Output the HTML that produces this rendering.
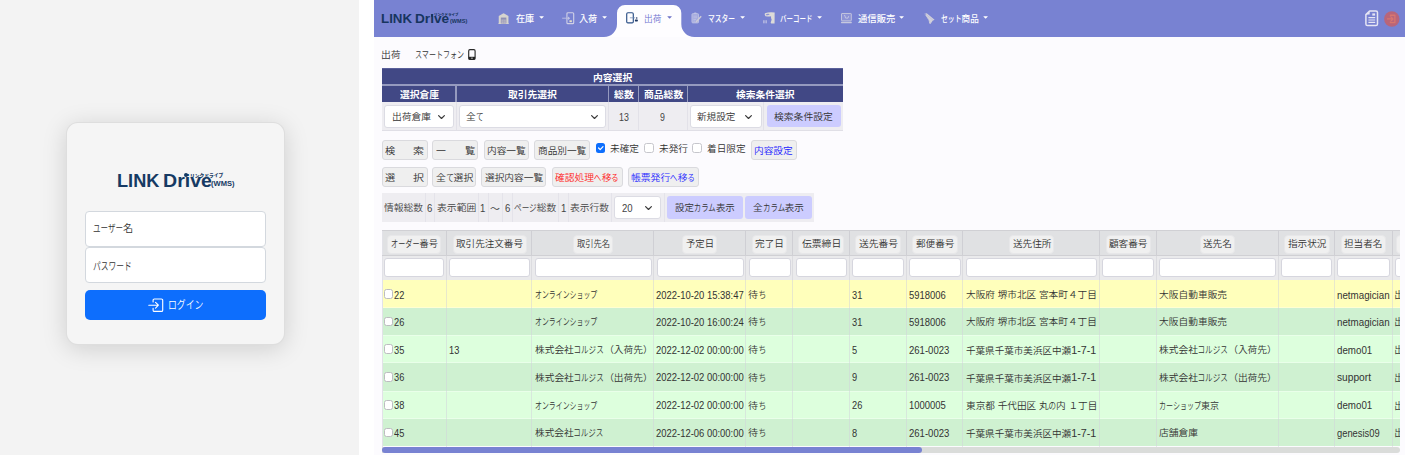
<!DOCTYPE html>
<html lang="ja"><head><meta charset="utf-8"><title>LINK Drive (WMS)</title><style>
html,body{margin:0;padding:0}
body{width:1405px;height:455px;overflow:hidden;background:#fff;position:relative;font-family:"Liberation Sans","Noto Sans CJK JP",sans-serif}
.b{position:absolute;box-sizing:border-box}
.t{position:absolute;white-space:nowrap;transform-origin:0 50%}
.k{display:inline-block;transform-origin:0 50%}
.a{font-size:112%;position:relative;top:-0.2px}
svg{position:absolute;overflow:visible}
</style></head><body>
<div class="b " style="left:0.0px;top:0.0px;width:359.0px;height:455.0px;background:#f3f3f3"></div>
<div class="b " style="left:66.0px;top:122.0px;width:219.0px;height:223.4px;background:#f5f5f5;border-radius:12px;border:1px solid rgba(0,0,0,.09);box-shadow:0 4px 24px rgba(0,0,0,.15)"></div>
<div id="t1" class="t" style="left:116.8px;top:165.9px;height:29px;line-height:29px;font-size:19.20px;color:#163a63;font-weight:700;transform:scaleX(0.9467);">LINK</div>
<div id="t2" class="t" style="left:163.2px;top:165.9px;height:29px;line-height:29px;font-size:19.20px;color:#163a63;font-weight:700;transform:scaleX(1.0198);">Drive</div>
<div id="t3" class="t" style="left:189.7px;top:171.8px;height:7px;line-height:7px;font-size:4.80px;color:#163a63;font-weight:900;transform:scaleX(0.9891);">リンクドライブ</div>
<div id="t4" class="t" style="left:211.4px;top:178.4px;height:11px;line-height:11px;font-size:7.20px;color:#163a63;font-weight:700;transform:scaleX(1.0514);">(WMS)</div>
<div class="b " style="left:184.1px;top:173.2px;width:3.9px;height:3.9px;background:#163a63;border-radius:50%"></div>
<div class="b " style="left:85.0px;top:211.0px;width:181.0px;height:35.6px;background:#fff;border:1px solid #d3d8de;border-radius:4px"></div>
<div class="b " style="left:85.0px;top:247.0px;width:181.0px;height:36.0px;background:#fff;border:1px solid #d3d8de;border-radius:4px"></div>
<div id="t5" class="t" style="left:92.5px;top:221.2px;height:16px;line-height:16px;font-size:10.40px;color:#333;font-weight:350;transform:scaleX(0.9825);"><span class="k" style="transform:scaleX(0.740);margin-right:-10.82px">ユーザー</span>名</div>
<div id="t6" class="t" style="left:92.5px;top:258.6px;height:16px;line-height:16px;font-size:10.40px;color:#333;font-weight:350;transform:scaleX(1.0080);"><span class="k" style="transform:scaleX(0.740);margin-right:-13.52px">パスワード</span></div>
<div class="b " style="left:85.0px;top:289.5px;width:180.7px;height:30.8px;background:#0d6efd;border-radius:5px"></div>
<svg style="left:148.3px;top:297.6px;" width="15.7" height="14.4" viewBox="0 0 16 14.5"><g fill="none" stroke="#fff" stroke-width="1.15" stroke-linecap="round" stroke-linejoin="round"><path d="M5.2 4V2.2a1.3 1.3 0 0 1 1.3-1.3h7.2A1.3 1.3 0 0 1 15 2.2v10.1a1.3 1.3 0 0 1-1.3 1.3H6.5a1.3 1.3 0 0 1-1.3-1.3v-1.8"/><path d="M0.8 7.25h9.6M7.7 4.3l2.9 2.95-2.9 2.95"/></g></svg>
<div id="t7" class="t" style="left:168.1px;top:297.1px;height:17px;line-height:17px;font-size:11.20px;color:#fff;font-weight:350;transform:scaleX(1.0148);"><span class="k" style="transform:scaleX(0.780);margin-right:-9.86px">ログイン</span></div>
<div class="b " style="left:374.0px;top:0.0px;width:1031.0px;height:455.0px;background:#fcfbfe"></div>
<div class="b " style="left:374.0px;top:0.0px;width:1031.0px;height:37.0px;background:#7882d2"></div>
<div id="t8" class="t" style="left:380.6px;top:8.7px;height:20px;line-height:20px;font-size:13.14px;color:#17355f;font-weight:700;transform:scaleX(1.0158);">LINK</div>
<div id="t9" class="t" style="left:414.8px;top:8.7px;height:20px;line-height:20px;font-size:13.14px;color:#17355f;font-weight:700;transform:scaleX(1.0399);">Drive</div>
<div id="t10" class="t" style="left:434.1px;top:12.9px;height:5px;line-height:5px;font-size:3.52px;color:#17355f;font-weight:900;transform:scaleX(0.9904);">リンクドライブ</div>
<div id="t11" class="t" style="left:450.1px;top:17.3px;height:8px;line-height:8px;font-size:5.28px;color:#17355f;font-weight:700;transform:scaleX(1.0528);">(WMS)</div>
<div class="b " style="left:430.6px;top:14.2px;width:2.6px;height:2.6px;background:#17355f;border-radius:50%"></div>
<svg style="left:600.0px;top:0.0px;" width="100.0" height="37.0" viewBox="0 0 100 37"><path d="M4 37 A13 13 0 0 0 17 24 L17 13 A8 8 0 0 1 25 5 L73.3 5 A8 8 0 0 1 81.3 13 L81.3 24 A13 13 0 0 0 94.3 37 Z" fill="#fefdff"/></svg>
<svg style="left:498.2px;top:12.6px;" width="11.2" height="11.1" viewBox="0 0 16 16"><path d="M8 0.3 L9.4 1 L15 4.2 V15 H15.8 V16 H0.2 V15 H1 V4.2 L6.6 1 Z" fill="#d6d4cf"/><rect x="4" y="6.6" width="8" height="8.4" fill="#8f8fb4"/><rect x="4.8" y="9.4" width="6.4" height="5.6" fill="#b7b4c4"/><path d="M4.8 11.8h6.4M8 9.4v5.6" stroke="#9a98b8" stroke-width=".6"/></svg>
<div id="t12" class="t" style="left:515.8px;top:13.3px;height:13px;line-height:13px;font-size:8.75px;color:#fff;font-weight:500;transform:scaleX(1.0411);">在庫</div>
<svg style="left:538.7px;top:15.8px;" width="5.2" height="2.7" viewBox="0 0 11.6 6.2"><path d="M1 0.4h9.6q0.9 0.1 0.3 0.9L6.5 5.7q-0.7 0.6-1.4 0L0.7 1.3q-0.6-0.8 0.3-0.9z" fill="#fff"/></svg>
<svg style="left:562.3px;top:11.7px;" width="12.4" height="12.4" viewBox="0 0 17.6 17.6"><g fill="none" stroke="#cfd0e6" stroke-width="1.6" stroke-linecap="round" stroke-linejoin="round"><rect x="7" y="1" width="9.6" height="15.6" rx="1.4"/></g><path d="M0.8 8.8h8.4" stroke="#b9bce2" stroke-width="1.4" stroke-linecap="round"/><path d="M8.6 6.4L11.6 8.8 8.6 11.2z" fill="#c6c8e4"/><rect x="10.6" y="11.8" width="3.4" height="2.6" fill="#e4e0c8"/></svg>
<div id="t13" class="t" style="left:579.4px;top:13.3px;height:13px;line-height:13px;font-size:8.75px;color:#fff;font-weight:500;transform:scaleX(1.0411);">入荷</div>
<svg style="left:602.2px;top:15.8px;" width="5.2" height="2.7" viewBox="0 0 11.6 6.2"><path d="M1 0.4h9.6q0.9 0.1 0.3 0.9L6.5 5.7q-0.7 0.6-1.4 0L0.7 1.3q-0.6-0.8 0.3-0.9z" fill="#fff"/></svg>
<svg style="left:625.7px;top:12.1px;" width="12.6" height="11.6" viewBox="0 0 17.6 16.2"><rect x="1" y="1" width="9.2" height="14.2" rx="1.7" fill="none" stroke="#2b4f86" stroke-width="1.6"/><path d="M5.4 8.1h7.4" stroke="#6d86b0" stroke-width="1"/><circle cx="15" cy="8.4" r="1.1" fill="#1f3864"/><rect x="12.4" y="10.6" width="4.2" height="2.6" rx="1" fill="#1f3864"/></svg>
<div id="t14" class="t" style="left:644.3px;top:13.3px;height:13px;line-height:13px;font-size:8.90px;color:#6f74d0;font-weight:350;transform:scaleX(0.9794);">出荷</div>
<svg style="left:667.3px;top:15.8px;" width="5.2" height="2.7" viewBox="0 0 11.6 6.2"><path d="M1 0.4h9.6q0.9 0.1 0.3 0.9L6.5 5.7q-0.7 0.6-1.4 0L0.7 1.3q-0.6-0.8 0.3-0.9z" fill="#6f74c8"/></svg>
<svg style="left:690.9px;top:12.3px;" width="11.0" height="11.6" viewBox="0 0 16 16.8"><path d="M1.4 3.6 Q1.4 2.4 2.6 2.4 H9.8 Q11 2.4 11 3.6 V14.6 Q11 15.8 9.8 15.8 H2.6 Q1.4 15.8 1.4 14.6 Z" fill="#a4aade" stroke="#c4c7e6" stroke-width="1.2"/><path d="M3.4 6h5.6M3.4 8.4h5.6M3.4 10.8h4M3.4 13.2h3" stroke="#c9cbe8" stroke-width=".9"/><path d="M4 2.6 Q4 0.6 6.2 0.6 Q8.4 0.6 8.4 2.6 Z" fill="#c4c7e6"/><path d="M7.2 13.2 L14 5.4 L15.6 6.8 L8.8 14.6 L6.6 15.4 Z" fill="#cdcbd6"/></svg>
<div id="t15" class="t" style="left:707.8px;top:13.3px;height:13px;line-height:13px;font-size:8.75px;color:#fff;font-weight:500;transform:scaleX(0.9665);"><span class="k" style="transform:scaleX(0.800);margin-right:-7.00px">マスター</span></div>
<svg style="left:739.7px;top:15.8px;" width="5.2" height="2.7" viewBox="0 0 11.6 6.2"><path d="M1 0.4h9.6q0.9 0.1 0.3 0.9L6.5 5.7q-0.7 0.6-1.4 0L0.7 1.3q-0.6-0.8 0.3-0.9z" fill="#fff"/></svg>
<svg style="left:762.6px;top:12.2px;" width="12.6" height="11.8" viewBox="0 0 17.2 16"><path d="M2.6 1.8 Q8 -0.4 16 0.6 L15.8 5 Q10 6.8 3.4 5.6 Q1.6 3.8 2.6 1.8 Z" fill="#dddbd8"/><ellipse cx="6.4" cy="3.4" rx="2.6" ry="1" fill="#8d93d4" transform="rotate(-8 6.4 3.4)"/><path d="M11 5.4 L15.9 4.6 L15.8 15.6 H11.4 Q10.2 15.4 10.6 14 L11.8 10.4 Q10.6 8.6 11 5.4 Z" fill="#dddbd8"/><path d="M0.9 11.2v4.2M2.7 11.2v4.2M4.6 11.2v4.2" stroke="#c9cbe6" stroke-width="1.1"/></svg>
<div id="t16" class="t" style="left:780.3px;top:13.3px;height:13px;line-height:13px;font-size:8.75px;color:#fff;font-weight:500;transform:scaleX(0.9266);"><span class="k" style="transform:scaleX(0.800);margin-right:-8.75px">バーコード</span></div>
<svg style="left:817.3px;top:15.8px;" width="5.2" height="2.7" viewBox="0 0 11.6 6.2"><path d="M1 0.4h9.6q0.9 0.1 0.3 0.9L6.5 5.7q-0.7 0.6-1.4 0L0.7 1.3q-0.6-0.8 0.3-0.9z" fill="#fff"/></svg>
<svg style="left:841.2px;top:13.0px;" width="10.8" height="10.2" viewBox="0 0 16 15.2"><rect x="0.7" y="0.7" width="14.6" height="11" rx="0.7" fill="#8d93d6" stroke="#c6c8de" stroke-width="1.4"/><path d="M4.4 3.6h1.2l1.2 4h3.6l1-3" stroke="#d8d9ea" stroke-width="1" fill="none"/><rect x="0" y="13" width="16" height="2.2" rx=".5" fill="#c6c8de"/></svg>
<div id="t17" class="t" style="left:857.6px;top:13.3px;height:13px;line-height:13px;font-size:8.75px;color:#fff;font-weight:500;transform:scaleX(1.0698);">通信販売</div>
<svg style="left:899.3px;top:15.8px;" width="5.2" height="2.7" viewBox="0 0 11.6 6.2"><path d="M1 0.4h9.6q0.9 0.1 0.3 0.9L6.5 5.7q-0.7 0.6-1.4 0L0.7 1.3q-0.6-0.8 0.3-0.9z" fill="#fff"/></svg>
<svg style="left:924.0px;top:12.6px;" width="11.0" height="11.2" viewBox="0 0 16 16.2"><path d="M0.6 1 L4 0.2 L15.4 9.6 L12.6 11.4 L9.4 15.8 L7.4 15 L7 10.4 Z" fill="#d2d1da"/><path d="M3 2.2L13 10.4M5 6.4L9 14.6" stroke="#b4b6d8" stroke-width=".8" fill="none"/><circle cx="2.2" cy="1.6" r=".8" fill="#8d93d4"/></svg>
<div id="t18" class="t" style="left:940.6px;top:13.3px;height:13px;line-height:13px;font-size:8.75px;color:#fff;font-weight:500;transform:scaleX(0.9811);"><span class="k" style="transform:scaleX(0.800);margin-right:-5.25px">セット</span>商品</div>
<svg style="left:983.1px;top:15.8px;" width="5.2" height="2.7" viewBox="0 0 11.6 6.2"><path d="M1 0.4h9.6q0.9 0.1 0.3 0.9L6.5 5.7q-0.7 0.6-1.4 0L0.7 1.3q-0.6-0.8 0.3-0.9z" fill="#fff"/></svg>
<svg style="left:1364.6px;top:10.2px;" width="13.4" height="16.5" viewBox="0 0 13.4 16.5"><path d="M4.6 0.9 H10.9 Q12.5 0.9 12.5 2.5 V14 Q12.5 15.6 10.9 15.6 H2.5 Q0.9 15.6 0.9 14 V4.6 Z" fill="none" stroke="#e6e6f4" stroke-width="1.5" stroke-linejoin="round"/><path d="M0.9 4.6 H4.6 V0.9 Z" fill="#e6e6f4"/><rect x="7.3" y="3.4" width="2.8" height="2.2" fill="#e6e6f4"/><path d="M3.4 7.6h6.8M3.4 10h6.8M3.4 12.4h6.8" stroke="#e6e6f4" stroke-width="1.1"/></svg>
<svg style="left:1384.3px;top:10.5px;" width="15.6" height="15.9" viewBox="0 0 16 16"><circle cx="8" cy="8" r="7.9" fill="#c4606a" opacity=".85"/><g fill="none" stroke="#d8766e" stroke-width="1.3" stroke-linecap="round" stroke-linejoin="round"><path d="M6.6 5V4.2h4.6v7.6H6.6V11"/><path d="M3.6 8h5.4M7.4 6.2L9.2 8 7.4 9.8"/></g></svg>
<div id="t19" class="t" style="left:381.2px;top:48.1px;height:14px;line-height:14px;font-size:9.60px;color:#333;font-weight:350;transform:scaleX(1.0260);">出荷</div>
<div id="t20" class="t" style="left:415.0px;top:48.1px;height:14px;line-height:14px;font-size:9.60px;color:#333;font-weight:350;transform:scaleX(0.9425);"><span class="k" style="transform:scaleX(0.780);margin-right:-14.78px">スマートフォン</span></div>
<svg style="left:468.3px;top:48.7px;" width="7.8" height="11.2" viewBox="0 0 7.8 11.2"><rect x="0.7" y="0.7" width="6.4" height="9.8" rx="1.2" fill="none" stroke="#2a2a2a" stroke-width="1.15"/><rect x="0.7" y="7.8" width="6.4" height="2.7" fill="#222"/><rect x="2.9" y="8.7" width="2" height=".9" fill="#ccc"/></svg>
<div class="b " style="left:382.4px;top:68.0px;width:460.8px;height:34.0px;background:#414885"></div>
<div class="b " style="left:382.4px;top:84.1px;width:460.8px;height:1.5px;background:#959abf"></div>
<div class="b " style="left:455.4px;top:85.0px;width:1.4px;height:17.0px;background:#959abf"></div>
<div class="b " style="left:607.8px;top:85.0px;width:1.4px;height:17.0px;background:#959abf"></div>
<div class="b " style="left:637.9px;top:85.0px;width:1.4px;height:17.0px;background:#959abf"></div>
<div class="b " style="left:686.5px;top:85.0px;width:1.4px;height:17.0px;background:#959abf"></div>
<div class="b " style="left:382.4px;top:68.0px;width:460.8px;height:1.0px;background:#5a609a"></div>
<div class="b " style="left:382.4px;top:101.8px;width:460.8px;height:28.7px;background:#eeedf1"></div>
<div class="b " style="left:455.6px;top:101.8px;width:1.0px;height:28.7px;background:#e2e1e8"></div>
<div class="b " style="left:608.0px;top:101.8px;width:1.0px;height:28.7px;background:#e2e1e8"></div>
<div class="b " style="left:638.1px;top:101.8px;width:1.0px;height:28.7px;background:#e2e1e8"></div>
<div class="b " style="left:686.7px;top:101.8px;width:1.0px;height:28.7px;background:#e2e1e8"></div>
<div class="b " style="left:763.3px;top:101.8px;width:1.0px;height:28.7px;background:#e2e1e8"></div>
<div class="b " style="left:382.4px;top:130.0px;width:460.8px;height:0.8px;background:#e0dfe6"></div>
<div id="t21" class="t" style="left:592.9px;top:70.8px;height:14px;line-height:14px;font-size:9.60px;color:#fff;font-weight:700;transform:scaleX(1.0210);">内容選択</div>
<div id="t22" class="t" style="left:399.6px;top:88.0px;height:14px;line-height:14px;font-size:9.60px;color:#fff;font-weight:700;transform:scaleX(1.0184);">選択倉庫</div>
<div id="t23" class="t" style="left:507.9px;top:88.0px;height:14px;line-height:14px;font-size:9.60px;color:#fff;font-weight:700;transform:scaleX(1.0190);">取引先選択</div>
<div id="t24" class="t" style="left:613.7px;top:88.0px;height:14px;line-height:14px;font-size:9.60px;color:#fff;font-weight:700;transform:scaleX(1.0315);">総数</div>
<div id="t25" class="t" style="left:643.5px;top:88.0px;height:14px;line-height:14px;font-size:9.60px;color:#fff;font-weight:700;transform:scaleX(1.0210);">商品総数</div>
<div id="t26" class="t" style="left:735.9px;top:88.0px;height:14px;line-height:14px;font-size:9.60px;color:#fff;font-weight:700;transform:scaleX(1.0141);">検索条件選択</div>
<div class="b " style="left:384.0px;top:105.0px;width:69.6px;height:22.8px;background:#fff;border:1px solid #dcdce4;border-radius:3px"></div>
<div id="t27" class="t" style="left:391.9px;top:109.6px;height:14px;line-height:14px;font-size:9.60px;color:#333;font-weight:350;transform:scaleX(1.0184);">出荷倉庫</div>
<svg style="left:437.7px;top:114.9px;" width="7.0" height="4.2" viewBox="0 0 7 4.2"><path d="M0.6 0.6L3.5 3.5 6.4 0.6" fill="none" stroke="#3a3a3a" stroke-width="1.2" stroke-linecap="round" stroke-linejoin="round"/></svg>
<div class="b " style="left:459.0px;top:105.0px;width:146.8px;height:22.8px;background:#fff;border:1px solid #dcdce4;border-radius:3px"></div>
<div id="t28" class="t" style="left:466.4px;top:109.6px;height:14px;line-height:14px;font-size:9.60px;color:#333;font-weight:350;transform:scaleX(1.0115);">全<span class="k" style="transform:scaleX(0.780);margin-right:-2.11px">て</span></div>
<svg style="left:590.7px;top:114.9px;" width="7.0" height="4.2" viewBox="0 0 7 4.2"><path d="M0.6 0.6L3.5 3.5 6.4 0.6" fill="none" stroke="#3a3a3a" stroke-width="1.2" stroke-linecap="round" stroke-linejoin="round"/></svg>
<div id="t29" class="t" style="left:618.6px;top:110.1px;height:15px;line-height:15px;font-size:10.00px;color:#444;font-weight:350;transform:scaleX(.88);">13</div>
<div id="t30" class="t" style="left:660.2px;top:110.1px;height:15px;line-height:15px;font-size:10.00px;color:#444;font-weight:350;transform:scaleX(.88);">9</div>
<div class="b " style="left:689.7px;top:105.0px;width:72.0px;height:22.8px;background:#fff;border:1px solid #dcdce4;border-radius:3px"></div>
<div id="t31" class="t" style="left:697.2px;top:109.6px;height:14px;line-height:14px;font-size:9.60px;color:#333;font-weight:350;transform:scaleX(0.9970);">新規設定</div>
<svg style="left:744.9px;top:114.9px;" width="7.0" height="4.2" viewBox="0 0 7 4.2"><path d="M0.6 0.6L3.5 3.5 6.4 0.6" fill="none" stroke="#3a3a3a" stroke-width="1.2" stroke-linecap="round" stroke-linejoin="round"/></svg>
<div class="b " style="left:767.0px;top:105.0px;width:73.5px;height:22.4px;background:#ccccff;border-radius:3px"></div>
<div id="t32" class="t" style="left:774.0px;top:109.8px;height:14px;line-height:14px;font-size:9.60px;color:#333;font-weight:350;transform:scaleX(1.0212);">検索条件設定</div>
<div class="b " style="left:382.0px;top:140.2px;width:45.8px;height:19.6px;background:#efefef;border:1px solid #dadade;border-radius:3px"></div>
<div id="t33" class="t" style="left:384.5px;top:144.2px;height:14px;line-height:14px;font-size:9.60px;color:#333;font-weight:350;transform:scaleX(1.0653);">検</div>
<div id="t34" class="t" style="left:413.0px;top:144.2px;height:14px;line-height:14px;font-size:9.60px;color:#333;font-weight:350;transform:scaleX(1.1455);">索</div>
<div class="b " style="left:432.4px;top:140.2px;width:45.8px;height:19.6px;background:#efefef;border:1px solid #dadade;border-radius:3px"></div>
<div id="t35" class="t" style="left:436.1px;top:144.2px;height:14px;line-height:14px;font-size:9.60px;color:#333;font-weight:350;transform:scaleX(1.0310);">一</div>
<div id="t36" class="t" style="left:465.0px;top:144.2px;height:14px;line-height:14px;font-size:9.60px;color:#333;font-weight:350;transform:scaleX(1.0653);">覧</div>
<div class="b " style="left:483.6px;top:140.2px;width:45.8px;height:19.6px;background:#efefef;border:1px solid #dadade;border-radius:3px"></div>
<div id="t37" class="t" style="left:487.2px;top:144.2px;height:14px;line-height:14px;font-size:9.60px;color:#333;font-weight:350;transform:scaleX(1.0077);">内容一覧</div>
<div class="b " style="left:534.4px;top:140.2px;width:55.4px;height:19.6px;background:#efefef;border:1px solid #dadade;border-radius:3px"></div>
<div id="t38" class="t" style="left:538.2px;top:144.2px;height:14px;line-height:14px;font-size:9.60px;color:#333;font-weight:350;transform:scaleX(1.0063);">商品別一覧</div>
<div class="b " style="left:595.7px;top:143.0px;width:9.6px;height:9.8px;background:#0d6efd;border-radius:2.5px"></div>
<svg style="left:595.7px;top:143.0px;" width="9.6" height="9.8" viewBox="0 0 9.6 9.8"><path d="M2.6 5l1.6 1.6L7 3.6" fill="none" stroke="#fff" stroke-width="1.2" stroke-linecap="round" stroke-linejoin="round"/></svg>
<div id="t39" class="t" style="left:609.8px;top:141.8px;height:14px;line-height:14px;font-size:9.60px;color:#333;font-weight:350;transform:scaleX(1.0065);">未確定</div>
<div class="b " style="left:644.2px;top:143.0px;width:9.6px;height:9.8px;background:#fff;border:1px solid #c6c6cc;border-radius:2.5px"></div>
<div id="t40" class="t" style="left:658.5px;top:141.8px;height:14px;line-height:14px;font-size:9.60px;color:#333;font-weight:350;transform:scaleX(1.0065);">未発行</div>
<div class="b " style="left:692.3px;top:143.0px;width:9.6px;height:9.8px;background:#fff;border:1px solid #c6c6cc;border-radius:2.5px"></div>
<div id="t41" class="t" style="left:706.9px;top:141.8px;height:14px;line-height:14px;font-size:9.60px;color:#333;font-weight:350;transform:scaleX(1.0050);">着日限定</div>
<div class="b " style="left:751.0px;top:140.2px;width:45.7px;height:19.6px;background:#efefef;border:1px solid #dadade;border-radius:3px"></div>
<div id="t42" class="t" style="left:754.4px;top:144.2px;height:14px;line-height:14px;font-size:9.60px;color:#1a1aff;font-weight:350;transform:scaleX(1.0077);">内容設定</div>
<div class="b " style="left:382.0px;top:167.1px;width:45.8px;height:19.6px;background:#efefef;border:1px solid #dadade;border-radius:3px"></div>
<div id="t43" class="t" style="left:384.5px;top:171.1px;height:14px;line-height:14px;font-size:9.60px;color:#333;font-weight:350;transform:scaleX(1.0653);">選</div>
<div id="t44" class="t" style="left:413.0px;top:171.1px;height:14px;line-height:14px;font-size:9.60px;color:#333;font-weight:350;transform:scaleX(1.1455);">択</div>
<div class="b " style="left:432.4px;top:167.1px;width:43.2px;height:19.6px;background:#efefef;border:1px solid #dadade;border-radius:3px"></div>
<div id="t45" class="t" style="left:435.6px;top:171.1px;height:14px;line-height:14px;font-size:9.60px;color:#333;font-weight:350;transform:scaleX(1.0282);">全<span class="k" style="transform:scaleX(0.780);margin-right:-2.11px">て</span>選択</div>
<div class="b " style="left:481.2px;top:167.1px;width:65.2px;height:19.6px;background:#efefef;border:1px solid #dadade;border-radius:3px"></div>
<div id="t46" class="t" style="left:484.8px;top:171.1px;height:14px;line-height:14px;font-size:9.60px;color:#333;font-weight:350;transform:scaleX(1.0088);">選択内容一覧</div>
<div class="b " style="left:552.0px;top:167.1px;width:70.7px;height:19.6px;background:#efefef;border:1px solid #dadade;border-radius:3px"></div>
<div id="t47" class="t" style="left:555.2px;top:171.1px;height:14px;line-height:14px;font-size:9.60px;color:#ff1a1a;font-weight:350;transform:scaleX(1.0181);">確認処理<span class="k" style="transform:scaleX(0.780);margin-right:-2.11px">へ</span>移<span class="k" style="transform:scaleX(0.780);margin-right:-2.11px">る</span></div>
<div class="b " style="left:627.5px;top:167.1px;width:71.3px;height:19.6px;background:#efefef;border:1px solid #dadade;border-radius:3px"></div>
<div id="t48" class="t" style="left:631.2px;top:171.1px;height:14px;line-height:14px;font-size:9.60px;color:#2a2aff;font-weight:350;transform:scaleX(1.0214);">帳票発行<span class="k" style="transform:scaleX(0.780);margin-right:-2.11px">へ</span>移<span class="k" style="transform:scaleX(0.780);margin-right:-2.11px">る</span></div>
<div class="b " style="left:382.0px;top:193.4px;width:431.8px;height:28.5px;background:#eeedf1"></div>
<div class="b " style="left:424.9px;top:193.4px;width:1.0px;height:28.5px;background:#e4e3ea"></div>
<div class="b " style="left:434.3px;top:193.4px;width:1.0px;height:28.5px;background:#e4e3ea"></div>
<div class="b " style="left:477.5px;top:193.4px;width:1.0px;height:28.5px;background:#e4e3ea"></div>
<div class="b " style="left:487.5px;top:193.4px;width:1.0px;height:28.5px;background:#e4e3ea"></div>
<div class="b " style="left:502.0px;top:193.4px;width:1.0px;height:28.5px;background:#e4e3ea"></div>
<div class="b " style="left:511.5px;top:193.4px;width:1.0px;height:28.5px;background:#e4e3ea"></div>
<div class="b " style="left:557.8px;top:193.4px;width:1.0px;height:28.5px;background:#e4e3ea"></div>
<div class="b " style="left:567.8px;top:193.4px;width:1.0px;height:28.5px;background:#e4e3ea"></div>
<div class="b " style="left:611.1px;top:193.4px;width:1.0px;height:28.5px;background:#e4e3ea"></div>
<div class="b " style="left:663.6px;top:193.4px;width:1.0px;height:28.5px;background:#e4e3ea"></div>
<div id="t49" class="t" style="left:384.2px;top:201.4px;height:14px;line-height:14px;font-size:9.60px;color:#444;font-weight:350;transform:scaleX(1.0184);">情報総数</div>
<div id="t50" class="t" style="left:427.4px;top:199.9px;height:16px;line-height:16px;font-size:10.90px;color:#444;font-weight:350;transform:scaleX(.88);">6</div>
<div id="t51" class="t" style="left:436.6px;top:201.4px;height:14px;line-height:14px;font-size:9.60px;color:#444;font-weight:350;transform:scaleX(1.0237);">表示範囲</div>
<div id="t52" class="t" style="left:480.4px;top:199.9px;height:16px;line-height:16px;font-size:10.90px;color:#444;font-weight:350;transform:scaleX(.88);">1</div>
<div id="t53" class="t" style="left:490.2px;top:201.6px;height:14px;line-height:14px;font-size:9.60px;color:#444;font-weight:350;transform:scaleX(1.0310);">～</div>
<div id="t54" class="t" style="left:504.6px;top:199.9px;height:16px;line-height:16px;font-size:10.90px;color:#444;font-weight:350;transform:scaleX(.88);">6</div>
<div id="t55" class="t" style="left:514.0px;top:201.4px;height:14px;line-height:14px;font-size:9.60px;color:#444;font-weight:350;transform:scaleX(1.0200);"><span class="k" style="transform:scaleX(0.780);margin-right:-6.34px">ページ</span>総数</div>
<div id="t56" class="t" style="left:560.6px;top:199.9px;height:16px;line-height:16px;font-size:10.90px;color:#444;font-weight:350;transform:scaleX(.88);">1</div>
<div id="t57" class="t" style="left:570.2px;top:201.4px;height:14px;line-height:14px;font-size:9.60px;color:#444;font-weight:350;transform:scaleX(1.0184);">表示行数</div>
<div class="b " style="left:614.4px;top:196.1px;width:47.0px;height:22.6px;background:#fff;border:1px solid #dcdce4;border-radius:3px"></div>
<div id="t58" class="t" style="left:622.0px;top:199.9px;height:16px;line-height:16px;font-size:10.60px;color:#444;font-weight:350;transform:scaleX(.9);">20</div>
<svg style="left:645.3px;top:206.3px;" width="7.0" height="4.2" viewBox="0 0 7 4.2"><path d="M0.6 0.6L3.5 3.5 6.4 0.6" fill="none" stroke="#3a3a3a" stroke-width="1.2" stroke-linecap="round" stroke-linejoin="round"/></svg>
<div class="b " style="left:667.0px;top:196.0px;width:76.0px;height:22.9px;background:#ccccff;border-radius:3px"></div>
<div id="t59" class="t" style="left:675.1px;top:201.4px;height:14px;line-height:14px;font-size:9.60px;color:#333;font-weight:350;transform:scaleX(0.9886);">設定<span class="k" style="transform:scaleX(0.780);margin-right:-6.34px">カラム</span>表示</div>
<div class="b " style="left:745.4px;top:196.0px;width:66.4px;height:22.9px;background:#ccccff;border-radius:3px"></div>
<div id="t60" class="t" style="left:753.2px;top:201.4px;height:14px;line-height:14px;font-size:9.60px;color:#333;font-weight:350;transform:scaleX(0.9982);">全<span class="k" style="transform:scaleX(0.780);margin-right:-6.34px">カラム</span>表示</div>
<div class="b" style="left:382.0px;top:0;width:1017.8px;height:447px;overflow:hidden"><div class="b" style="left:0.0px;top:230.8px;width:1100.0px;height:24.6px;background:#e0e1e3"></div><div class="b" style="left:0.0px;top:255.4px;width:1100.0px;height:25.0px;background:#eaeaec"></div><div class="b" style="left:0.0px;top:280.4px;width:1100.0px;height:27.3px;background:#ffffbb"></div><div class="b" style="left:0.0px;top:307.7px;width:1100.0px;height:27.5px;background:#cff1d1"></div><div class="b" style="left:0.0px;top:307.3px;width:1100.0px;height:0.8px;background:rgba(255,255,255,.35)"></div><div class="b" style="left:0.0px;top:335.2px;width:1100.0px;height:27.6px;background:#ddffdd"></div><div class="b" style="left:0.0px;top:334.8px;width:1100.0px;height:0.8px;background:rgba(255,255,255,.35)"></div><div class="b" style="left:0.0px;top:362.8px;width:1100.0px;height:28.2px;background:#cff1d1"></div><div class="b" style="left:0.0px;top:362.4px;width:1100.0px;height:0.8px;background:rgba(255,255,255,.35)"></div><div class="b" style="left:0.0px;top:391.0px;width:1100.0px;height:27.8px;background:#ddffdd"></div><div class="b" style="left:0.0px;top:390.6px;width:1100.0px;height:0.8px;background:rgba(255,255,255,.35)"></div><div class="b" style="left:0.0px;top:418.8px;width:1100.0px;height:27.5px;background:#cff1d1"></div><div class="b" style="left:0.0px;top:418.4px;width:1100.0px;height:0.8px;background:rgba(255,255,255,.35)"></div><div class="b" style="left:63.7px;top:230.8px;width:1.0px;height:24.6px;background:#cfcfd4"></div><div class="b" style="left:63.7px;top:255.4px;width:1.0px;height:25.0px;background:#dcdce0"></div><div class="b" style="left:63.7px;top:280.4px;width:1.0px;height:166.4px;background:rgba(210,210,220,.5)"></div><div class="b" style="left:149.3px;top:230.8px;width:1.0px;height:24.6px;background:#cfcfd4"></div><div class="b" style="left:149.3px;top:255.4px;width:1.0px;height:25.0px;background:#dcdce0"></div><div class="b" style="left:149.3px;top:280.4px;width:1.0px;height:166.4px;background:rgba(210,210,220,.5)"></div><div class="b" style="left:271.4px;top:230.8px;width:1.0px;height:24.6px;background:#cfcfd4"></div><div class="b" style="left:271.4px;top:255.4px;width:1.0px;height:25.0px;background:#dcdce0"></div><div class="b" style="left:271.4px;top:280.4px;width:1.0px;height:166.4px;background:rgba(210,210,220,.5)"></div><div class="b" style="left:363.4px;top:230.8px;width:1.0px;height:24.6px;background:#cfcfd4"></div><div class="b" style="left:363.4px;top:255.4px;width:1.0px;height:25.0px;background:#dcdce0"></div><div class="b" style="left:363.4px;top:280.4px;width:1.0px;height:166.4px;background:rgba(210,210,220,.5)"></div><div class="b" style="left:410.4px;top:230.8px;width:1.0px;height:24.6px;background:#cfcfd4"></div><div class="b" style="left:410.4px;top:255.4px;width:1.0px;height:25.0px;background:#dcdce0"></div><div class="b" style="left:410.4px;top:280.4px;width:1.0px;height:166.4px;background:rgba(210,210,220,.5)"></div><div class="b" style="left:467.0px;top:230.8px;width:1.0px;height:24.6px;background:#cfcfd4"></div><div class="b" style="left:467.0px;top:255.4px;width:1.0px;height:25.0px;background:#dcdce0"></div><div class="b" style="left:467.0px;top:280.4px;width:1.0px;height:166.4px;background:rgba(210,210,220,.5)"></div><div class="b" style="left:524.1px;top:230.8px;width:1.0px;height:24.6px;background:#cfcfd4"></div><div class="b" style="left:524.1px;top:255.4px;width:1.0px;height:25.0px;background:#dcdce0"></div><div class="b" style="left:524.1px;top:280.4px;width:1.0px;height:166.4px;background:rgba(210,210,220,.5)"></div><div class="b" style="left:580.4px;top:230.8px;width:1.0px;height:24.6px;background:#cfcfd4"></div><div class="b" style="left:580.4px;top:255.4px;width:1.0px;height:25.0px;background:#dcdce0"></div><div class="b" style="left:580.4px;top:280.4px;width:1.0px;height:166.4px;background:rgba(210,210,220,.5)"></div><div class="b" style="left:716.9px;top:230.8px;width:1.0px;height:24.6px;background:#cfcfd4"></div><div class="b" style="left:716.9px;top:255.4px;width:1.0px;height:25.0px;background:#dcdce0"></div><div class="b" style="left:716.9px;top:280.4px;width:1.0px;height:166.4px;background:rgba(210,210,220,.5)"></div><div class="b" style="left:773.6px;top:230.8px;width:1.0px;height:24.6px;background:#cfcfd4"></div><div class="b" style="left:773.6px;top:255.4px;width:1.0px;height:25.0px;background:#dcdce0"></div><div class="b" style="left:773.6px;top:280.4px;width:1.0px;height:166.4px;background:rgba(210,210,220,.5)"></div><div class="b" style="left:895.7px;top:230.8px;width:1.0px;height:24.6px;background:#cfcfd4"></div><div class="b" style="left:895.7px;top:255.4px;width:1.0px;height:25.0px;background:#dcdce0"></div><div class="b" style="left:895.7px;top:280.4px;width:1.0px;height:166.4px;background:rgba(210,210,220,.5)"></div><div class="b" style="left:952.2px;top:230.8px;width:1.0px;height:24.6px;background:#cfcfd4"></div><div class="b" style="left:952.2px;top:255.4px;width:1.0px;height:25.0px;background:#dcdce0"></div><div class="b" style="left:952.2px;top:280.4px;width:1.0px;height:166.4px;background:rgba(210,210,220,.5)"></div><div class="b" style="left:1009.6px;top:230.8px;width:1.0px;height:24.6px;background:#cfcfd4"></div><div class="b" style="left:1009.6px;top:255.4px;width:1.0px;height:25.0px;background:#dcdce0"></div><div class="b" style="left:1009.6px;top:280.4px;width:1.0px;height:166.4px;background:rgba(210,210,220,.5)"></div><div class="b" style="left:-0.3px;top:230.8px;width:1.0px;height:216.0px;background:#e2e2e8"></div><div class="b" style="left:0.0px;top:230.3px;width:1100.0px;height:1.0px;background:#d0d0d4"></div><div class="b" style="left:0.0px;top:254.9px;width:1100.0px;height:1.0px;background:#d0d0d4"></div><div class="b" style="left:5.2px;top:234.5px;width:53.8px;height:19.0px;background:#f0f0f0;border:1px solid #e7e7e9;border-radius:4px"></div><div class="b" style="left:70.7px;top:234.5px;width:73.9px;height:19.0px;background:#f0f0f0;border:1px solid #e7e7e9;border-radius:4px"></div><div class="b" style="left:191.3px;top:234.5px;width:40.2px;height:19.0px;background:#f0f0f0;border:1px solid #e7e7e9;border-radius:4px"></div><div class="b" style="left:300.4px;top:234.5px;width:35.0px;height:19.0px;background:#f0f0f0;border:1px solid #e7e7e9;border-radius:4px"></div><div class="b" style="left:369.6px;top:234.5px;width:35.9px;height:19.0px;background:#f0f0f0;border:1px solid #e7e7e9;border-radius:4px"></div><div class="b" style="left:416.4px;top:234.5px;width:46.1px;height:19.0px;background:#f0f0f0;border:1px solid #e7e7e9;border-radius:4px"></div><div class="b" style="left:473.4px;top:234.5px;width:45.9px;height:19.0px;background:#f0f0f0;border:1px solid #e7e7e9;border-radius:4px"></div><div class="b" style="left:530.4px;top:234.5px;width:45.4px;height:19.0px;background:#f0f0f0;border:1px solid #e7e7e9;border-radius:4px"></div><div class="b" style="left:627.1px;top:234.5px;width:45.4px;height:19.0px;background:#f0f0f0;border:1px solid #e7e7e9;border-radius:4px"></div><div class="b" style="left:723.9px;top:234.5px;width:45.4px;height:19.0px;background:#f0f0f0;border:1px solid #e7e7e9;border-radius:4px"></div><div class="b" style="left:817.8px;top:234.5px;width:35.7px;height:19.0px;background:#f0f0f0;border:1px solid #e7e7e9;border-radius:4px"></div><div class="b" style="left:902.2px;top:234.5px;width:45.4px;height:19.0px;background:#f0f0f0;border:1px solid #e7e7e9;border-radius:4px"></div><div class="b" style="left:958.9px;top:234.5px;width:45.4px;height:19.0px;background:#f0f0f0;border:1px solid #e7e7e9;border-radius:4px"></div><div class="b" style="left:1014.3px;top:234.5px;width:44.0px;height:19.0px;background:#f0f0f0;border:1px solid #e7e7e9;border-radius:4px"></div><div class="b" style="left:2.2px;top:258.2px;width:59.8px;height:19.2px;background:#fff;border:1px solid #d6d6de;border-radius:3px"></div><div class="b" style="left:66.9px;top:258.2px;width:80.7px;height:19.2px;background:#fff;border:1px solid #d6d6de;border-radius:3px"></div><div class="b" style="left:152.5px;top:258.2px;width:117.2px;height:19.2px;background:#fff;border:1px solid #d6d6de;border-radius:3px"></div><div class="b" style="left:274.6px;top:258.2px;width:87.1px;height:19.2px;background:#fff;border:1px solid #d6d6de;border-radius:3px"></div><div class="b" style="left:366.6px;top:258.2px;width:42.1px;height:19.2px;background:#fff;border:1px solid #d6d6de;border-radius:3px"></div><div class="b" style="left:413.6px;top:258.2px;width:51.7px;height:19.2px;background:#fff;border:1px solid #d6d6de;border-radius:3px"></div><div class="b" style="left:470.2px;top:258.2px;width:52.2px;height:19.2px;background:#fff;border:1px solid #d6d6de;border-radius:3px"></div><div class="b" style="left:527.3px;top:258.2px;width:51.4px;height:19.2px;background:#fff;border:1px solid #d6d6de;border-radius:3px"></div><div class="b" style="left:583.6px;top:258.2px;width:131.6px;height:19.2px;background:#fff;border:1px solid #d6d6de;border-radius:3px"></div><div class="b" style="left:720.1px;top:258.2px;width:51.8px;height:19.2px;background:#fff;border:1px solid #d6d6de;border-radius:3px"></div><div class="b" style="left:776.8px;top:258.2px;width:117.2px;height:19.2px;background:#fff;border:1px solid #d6d6de;border-radius:3px"></div><div class="b" style="left:898.9px;top:258.2px;width:51.6px;height:19.2px;background:#fff;border:1px solid #d6d6de;border-radius:3px"></div><div class="b" style="left:955.4px;top:258.2px;width:52.5px;height:19.2px;background:#fff;border:1px solid #d6d6de;border-radius:3px"></div><div class="b" style="left:1012.8px;top:258.2px;width:52.5px;height:19.2px;background:#fff;border:1px solid #d6d6de;border-radius:3px"></div><div class="b" style="left:2.3px;top:289.2px;width:9.0px;height:9.7px;background:#fff;border:1px solid #bcbcc0;border-radius:2.5px"></div><div class="b" style="left:2.3px;top:316.6px;width:9.0px;height:9.7px;background:#fff;border:1px solid #bcbcc0;border-radius:2.5px"></div><div class="b" style="left:2.3px;top:344.1px;width:9.0px;height:9.7px;background:#fff;border:1px solid #bcbcc0;border-radius:2.5px"></div><div class="b" style="left:2.3px;top:372.0px;width:9.0px;height:9.7px;background:#fff;border:1px solid #bcbcc0;border-radius:2.5px"></div><div class="b" style="left:2.3px;top:400.0px;width:9.0px;height:9.7px;background:#fff;border:1px solid #bcbcc0;border-radius:2.5px"></div><div class="b" style="left:2.3px;top:427.7px;width:9.0px;height:9.7px;background:#fff;border:1px solid #bcbcc0;border-radius:2.5px"></div></div>
<div id="t61" class="t" style="left:390.7px;top:237.0px;height:14px;line-height:14px;font-size:9.60px;color:#333;font-weight:350;transform:scaleX(0.9532);"><span class="k" style="transform:scaleX(0.780);margin-right:-8.45px">オーダー</span>番号</div>
<div id="t62" class="t" style="left:456.2px;top:237.0px;height:14px;line-height:14px;font-size:9.60px;color:#333;font-weight:350;transform:scaleX(0.9971);">取引先注文番号</div>
<div id="t63" class="t" style="left:576.8px;top:237.0px;height:14px;line-height:14px;font-size:9.60px;color:#333;font-weight:350;transform:scaleX(0.8637);">取引先名</div>
<div id="t64" class="t" style="left:685.9px;top:237.0px;height:14px;line-height:14px;font-size:9.60px;color:#333;font-weight:350;transform:scaleX(0.9743);">予定日</div>
<div id="t65" class="t" style="left:755.1px;top:237.0px;height:14px;line-height:14px;font-size:9.60px;color:#333;font-weight:350;transform:scaleX(1.0065);">完了日</div>
<div id="t66" class="t" style="left:801.9px;top:237.0px;height:14px;line-height:14px;font-size:9.60px;color:#333;font-weight:350;transform:scaleX(1.0210);">伝票締日</div>
<div id="t67" class="t" style="left:858.9px;top:237.0px;height:14px;line-height:14px;font-size:9.60px;color:#333;font-weight:350;transform:scaleX(1.0157);">送先番号</div>
<div id="t68" class="t" style="left:915.9px;top:237.0px;height:14px;line-height:14px;font-size:9.60px;color:#333;font-weight:350;transform:scaleX(1.0024);">郵便番号</div>
<div id="t69" class="t" style="left:1012.6px;top:237.0px;height:14px;line-height:14px;font-size:9.60px;color:#333;font-weight:350;transform:scaleX(1.0024);">送先住所</div>
<div id="t70" class="t" style="left:1109.4px;top:237.0px;height:14px;line-height:14px;font-size:9.60px;color:#333;font-weight:350;transform:scaleX(1.0024);">顧客番号</div>
<div id="t71" class="t" style="left:1203.3px;top:237.0px;height:14px;line-height:14px;font-size:9.60px;color:#333;font-weight:350;transform:scaleX(0.9994);">送先名</div>
<div id="t72" class="t" style="left:1287.7px;top:237.0px;height:14px;line-height:14px;font-size:9.60px;color:#333;font-weight:350;transform:scaleX(1.0024);">指示状況</div>
<div id="t73" class="t" style="left:1344.4px;top:237.0px;height:14px;line-height:14px;font-size:9.60px;color:#333;font-weight:350;transform:scaleX(1.0024);">担当者名</div>
<div class="b " style="left:1398.0px;top:236.0px;width:1.8px;height:16.0px;background:#aaa;opacity:0"></div>
<div id="t74" class="t" style="left:393.5px;top:287.7px;height:14px;line-height:14px;font-size:9.60px;color:#333;font-weight:350;transform:scaleX(.86);"><span class="a">22</span></div>
<div id="t75" class="t" style="left:534.9px;top:287.7px;height:14px;line-height:14px;font-size:9.60px;color:#333;font-weight:350;transform:scaleX(0.9236);"><span class="k" style="transform:scaleX(0.780);margin-right:-19.01px">オンラインショップ</span></div>
<div id="t76" class="t" style="left:656.1px;top:287.7px;height:14px;line-height:14px;font-size:9.60px;color:#333;font-weight:350;transform:scaleX(0.8786);"><span class="a">2022-10-20 15:38:47</span></div>
<div id="t77" class="t" style="left:748.4px;top:287.7px;height:14px;line-height:14px;font-size:9.60px;color:#333;font-weight:350;transform:scaleX(1.0423);">待<span class="k" style="transform:scaleX(0.780);margin-right:-2.11px">ち</span></div>
<div id="t78" class="t" style="left:852.2px;top:287.7px;height:14px;line-height:14px;font-size:9.60px;color:#333;font-weight:350;transform:scaleX(.86);"><span class="a">31</span></div>
<div id="t79" class="t" style="left:909.0px;top:287.7px;height:14px;line-height:14px;font-size:9.60px;color:#333;font-weight:350;transform:scaleX(0.8794);"><span class="a">5918006</span></div>
<div id="t80" class="t" style="left:965.5px;top:287.7px;height:14px;line-height:14px;font-size:9.60px;color:#333;font-weight:350;transform:scaleX(1.0062);">大阪府 堺市北区 宮本町４丁目</div>
<div id="t81" class="t" style="left:1158.9px;top:287.7px;height:14px;line-height:14px;font-size:9.60px;color:#333;font-weight:350;transform:scaleX(1.0137);">大阪自動車販売</div>
<div id="t82" class="t" style="left:1337.3px;top:287.7px;height:14px;line-height:14px;font-size:9.60px;color:#333;font-weight:350;transform:scaleX(0.9082);"><span class="a">netmagician</span></div>
<div id="t83" class="t" style="left:1394.2px;top:287.7px;height:14px;line-height:14px;font-size:9.60px;color:#333;font-weight:350;width:5.6px;overflow:hidden;">出</div>
<div id="t84" class="t" style="left:393.5px;top:315.1px;height:14px;line-height:14px;font-size:9.60px;color:#333;font-weight:350;transform:scaleX(.86);"><span class="a">26</span></div>
<div id="t85" class="t" style="left:534.9px;top:315.1px;height:14px;line-height:14px;font-size:9.60px;color:#333;font-weight:350;transform:scaleX(0.9236);"><span class="k" style="transform:scaleX(0.780);margin-right:-19.01px">オンラインショップ</span></div>
<div id="t86" class="t" style="left:656.1px;top:315.1px;height:14px;line-height:14px;font-size:9.60px;color:#333;font-weight:350;transform:scaleX(0.8786);"><span class="a">2022-10-20 16:00:24</span></div>
<div id="t87" class="t" style="left:748.4px;top:315.1px;height:14px;line-height:14px;font-size:9.60px;color:#333;font-weight:350;transform:scaleX(1.0423);">待<span class="k" style="transform:scaleX(0.780);margin-right:-2.11px">ち</span></div>
<div id="t88" class="t" style="left:852.2px;top:315.1px;height:14px;line-height:14px;font-size:9.60px;color:#333;font-weight:350;transform:scaleX(.86);"><span class="a">31</span></div>
<div id="t89" class="t" style="left:909.0px;top:315.1px;height:14px;line-height:14px;font-size:9.60px;color:#333;font-weight:350;transform:scaleX(0.8794);"><span class="a">5918006</span></div>
<div id="t90" class="t" style="left:965.5px;top:315.1px;height:14px;line-height:14px;font-size:9.60px;color:#333;font-weight:350;transform:scaleX(1.0062);">大阪府 堺市北区 宮本町４丁目</div>
<div id="t91" class="t" style="left:1158.9px;top:315.1px;height:14px;line-height:14px;font-size:9.60px;color:#333;font-weight:350;transform:scaleX(1.0137);">大阪自動車販売</div>
<div id="t92" class="t" style="left:1337.3px;top:315.1px;height:14px;line-height:14px;font-size:9.60px;color:#333;font-weight:350;transform:scaleX(0.9082);"><span class="a">netmagician</span></div>
<div id="t93" class="t" style="left:1394.2px;top:315.1px;height:14px;line-height:14px;font-size:9.60px;color:#333;font-weight:350;width:5.6px;overflow:hidden;">出</div>
<div id="t94" class="t" style="left:393.5px;top:342.7px;height:14px;line-height:14px;font-size:9.60px;color:#333;font-weight:350;transform:scaleX(.86);"><span class="a">35</span></div>
<div id="t95" class="t" style="left:449.3px;top:342.7px;height:14px;line-height:14px;font-size:9.60px;color:#333;font-weight:350;transform:scaleX(.86);"><span class="a">13</span></div>
<div id="t96" class="t" style="left:534.9px;top:342.7px;height:14px;line-height:14px;font-size:9.60px;color:#333;font-weight:350;transform:scaleX(1.0119);">株式会社<span class="k" style="transform:scaleX(0.780);margin-right:-8.45px">コルジス</span>（入荷先）</div>
<div id="t97" class="t" style="left:656.1px;top:342.7px;height:14px;line-height:14px;font-size:9.60px;color:#333;font-weight:350;transform:scaleX(0.8786);"><span class="a">2022-12-02 00:00:00</span></div>
<div id="t98" class="t" style="left:748.4px;top:342.7px;height:14px;line-height:14px;font-size:9.60px;color:#333;font-weight:350;transform:scaleX(1.0423);">待<span class="k" style="transform:scaleX(0.780);margin-right:-2.11px">ち</span></div>
<div id="t99" class="t" style="left:852.2px;top:342.7px;height:14px;line-height:14px;font-size:9.60px;color:#333;font-weight:350;transform:scaleX(.86);"><span class="a">5</span></div>
<div id="t100" class="t" style="left:909.0px;top:342.7px;height:14px;line-height:14px;font-size:9.60px;color:#333;font-weight:350;transform:scaleX(0.8874);"><span class="a">261-0023</span></div>
<div id="t101" class="t" style="left:965.5px;top:342.7px;height:14px;line-height:14px;font-size:9.60px;color:#333;font-weight:350;transform:scaleX(0.9967);">千葉県千葉市美浜区中瀬<span class="a">1-7-1</span></div>
<div id="t102" class="t" style="left:1158.9px;top:342.7px;height:14px;line-height:14px;font-size:9.60px;color:#333;font-weight:350;transform:scaleX(1.0128);">株式会社<span class="k" style="transform:scaleX(0.780);margin-right:-8.45px">コルジス</span>（入荷先）</div>
<div id="t103" class="t" style="left:1337.3px;top:342.7px;height:14px;line-height:14px;font-size:9.60px;color:#333;font-weight:350;transform:scaleX(0.9070);"><span class="a">demo01</span></div>
<div id="t104" class="t" style="left:1394.2px;top:342.7px;height:14px;line-height:14px;font-size:9.60px;color:#333;font-weight:350;width:5.6px;overflow:hidden;">出</div>
<div id="t105" class="t" style="left:393.5px;top:370.6px;height:14px;line-height:14px;font-size:9.60px;color:#333;font-weight:350;transform:scaleX(.86);"><span class="a">36</span></div>
<div id="t106" class="t" style="left:534.9px;top:370.6px;height:14px;line-height:14px;font-size:9.60px;color:#333;font-weight:350;transform:scaleX(1.0119);">株式会社<span class="k" style="transform:scaleX(0.780);margin-right:-8.45px">コルジス</span>（出荷先）</div>
<div id="t107" class="t" style="left:656.1px;top:370.6px;height:14px;line-height:14px;font-size:9.60px;color:#333;font-weight:350;transform:scaleX(0.8786);"><span class="a">2022-12-02 00:00:00</span></div>
<div id="t108" class="t" style="left:748.4px;top:370.6px;height:14px;line-height:14px;font-size:9.60px;color:#333;font-weight:350;transform:scaleX(1.0423);">待<span class="k" style="transform:scaleX(0.780);margin-right:-2.11px">ち</span></div>
<div id="t109" class="t" style="left:852.2px;top:370.6px;height:14px;line-height:14px;font-size:9.60px;color:#333;font-weight:350;transform:scaleX(.86);"><span class="a">9</span></div>
<div id="t110" class="t" style="left:909.0px;top:370.6px;height:14px;line-height:14px;font-size:9.60px;color:#333;font-weight:350;transform:scaleX(0.8874);"><span class="a">261-0023</span></div>
<div id="t111" class="t" style="left:965.5px;top:370.6px;height:14px;line-height:14px;font-size:9.60px;color:#333;font-weight:350;transform:scaleX(0.9967);">千葉県千葉市美浜区中瀬<span class="a">1-7-1</span></div>
<div id="t112" class="t" style="left:1158.9px;top:370.6px;height:14px;line-height:14px;font-size:9.60px;color:#333;font-weight:350;transform:scaleX(1.0128);">株式会社<span class="k" style="transform:scaleX(0.780);margin-right:-8.45px">コルジス</span>（出荷先）</div>
<div id="t113" class="t" style="left:1337.3px;top:370.6px;height:14px;line-height:14px;font-size:9.60px;color:#333;font-weight:350;transform:scaleX(0.9479);"><span class="a">support</span></div>
<div id="t114" class="t" style="left:1394.2px;top:370.6px;height:14px;line-height:14px;font-size:9.60px;color:#333;font-weight:350;width:5.6px;overflow:hidden;">出</div>
<div id="t115" class="t" style="left:393.5px;top:398.6px;height:14px;line-height:14px;font-size:9.60px;color:#333;font-weight:350;transform:scaleX(.86);"><span class="a">38</span></div>
<div id="t116" class="t" style="left:534.9px;top:398.6px;height:14px;line-height:14px;font-size:9.60px;color:#333;font-weight:350;transform:scaleX(0.9236);"><span class="k" style="transform:scaleX(0.780);margin-right:-19.01px">オンラインショップ</span></div>
<div id="t117" class="t" style="left:656.1px;top:398.6px;height:14px;line-height:14px;font-size:9.60px;color:#333;font-weight:350;transform:scaleX(0.8786);"><span class="a">2022-12-02 00:00:00</span></div>
<div id="t118" class="t" style="left:748.4px;top:398.6px;height:14px;line-height:14px;font-size:9.60px;color:#333;font-weight:350;transform:scaleX(1.0423);">待<span class="k" style="transform:scaleX(0.780);margin-right:-2.11px">ち</span></div>
<div id="t119" class="t" style="left:852.2px;top:398.6px;height:14px;line-height:14px;font-size:9.60px;color:#333;font-weight:350;transform:scaleX(.86);"><span class="a">26</span></div>
<div id="t120" class="t" style="left:909.0px;top:398.6px;height:14px;line-height:14px;font-size:9.60px;color:#333;font-weight:350;transform:scaleX(0.8794);"><span class="a">1000005</span></div>
<div id="t121" class="t" style="left:965.5px;top:398.6px;height:14px;line-height:14px;font-size:9.60px;color:#333;font-weight:350;transform:scaleX(1.0057);">東京都 千代田区 丸<span class="k" style="transform:scaleX(0.780);margin-right:-2.11px">の</span>内 １丁目</div>
<div id="t122" class="t" style="left:1158.9px;top:398.6px;height:14px;line-height:14px;font-size:9.60px;color:#333;font-weight:350;transform:scaleX(0.9406);"><span class="k" style="transform:scaleX(0.780);margin-right:-12.67px">カーショップ</span>東京</div>
<div id="t123" class="t" style="left:1337.3px;top:398.6px;height:14px;line-height:14px;font-size:9.60px;color:#333;font-weight:350;transform:scaleX(0.9070);"><span class="a">demo01</span></div>
<div id="t124" class="t" style="left:1394.2px;top:398.6px;height:14px;line-height:14px;font-size:9.60px;color:#333;font-weight:350;width:5.6px;overflow:hidden;">出</div>
<div id="t125" class="t" style="left:393.5px;top:426.2px;height:14px;line-height:14px;font-size:9.60px;color:#333;font-weight:350;transform:scaleX(.86);"><span class="a">45</span></div>
<div id="t126" class="t" style="left:534.9px;top:426.2px;height:14px;line-height:14px;font-size:9.60px;color:#333;font-weight:350;transform:scaleX(1.0067);">株式会社<span class="k" style="transform:scaleX(0.780);margin-right:-8.45px">コルジス</span></div>
<div id="t127" class="t" style="left:656.1px;top:426.2px;height:14px;line-height:14px;font-size:9.60px;color:#333;font-weight:350;transform:scaleX(0.8786);"><span class="a">2022-12-06 00:00:00</span></div>
<div id="t128" class="t" style="left:748.4px;top:426.2px;height:14px;line-height:14px;font-size:9.60px;color:#333;font-weight:350;transform:scaleX(1.0423);">待<span class="k" style="transform:scaleX(0.780);margin-right:-2.11px">ち</span></div>
<div id="t129" class="t" style="left:852.2px;top:426.2px;height:14px;line-height:14px;font-size:9.60px;color:#333;font-weight:350;transform:scaleX(.86);"><span class="a">8</span></div>
<div id="t130" class="t" style="left:909.0px;top:426.2px;height:14px;line-height:14px;font-size:9.60px;color:#333;font-weight:350;transform:scaleX(0.8874);"><span class="a">261-0023</span></div>
<div id="t131" class="t" style="left:965.5px;top:426.2px;height:14px;line-height:14px;font-size:9.60px;color:#333;font-weight:350;transform:scaleX(0.9967);">千葉県千葉市美浜区中瀬<span class="a">1-7-1</span></div>
<div id="t132" class="t" style="left:1158.9px;top:426.2px;height:14px;line-height:14px;font-size:9.60px;color:#333;font-weight:350;transform:scaleX(1.0184);">店舗倉庫</div>
<div id="t133" class="t" style="left:1337.3px;top:426.2px;height:14px;line-height:14px;font-size:9.60px;color:#333;font-weight:350;transform:scaleX(0.8691);"><span class="a">genesis09</span></div>
<div id="t134" class="t" style="left:1394.2px;top:426.2px;height:14px;line-height:14px;font-size:9.60px;color:#333;font-weight:350;width:5.6px;overflow:hidden;">出</div>
<div class="b " style="left:382.0px;top:446.8px;width:1017.6px;height:6.4px;background:#dadcda;border-radius:0 3.2px 3.2px 0"></div>
<div class="b " style="left:382.0px;top:447.0px;width:540.4px;height:6.2px;background:#7882d2;border-radius:3.2px"></div>
</body></html>
